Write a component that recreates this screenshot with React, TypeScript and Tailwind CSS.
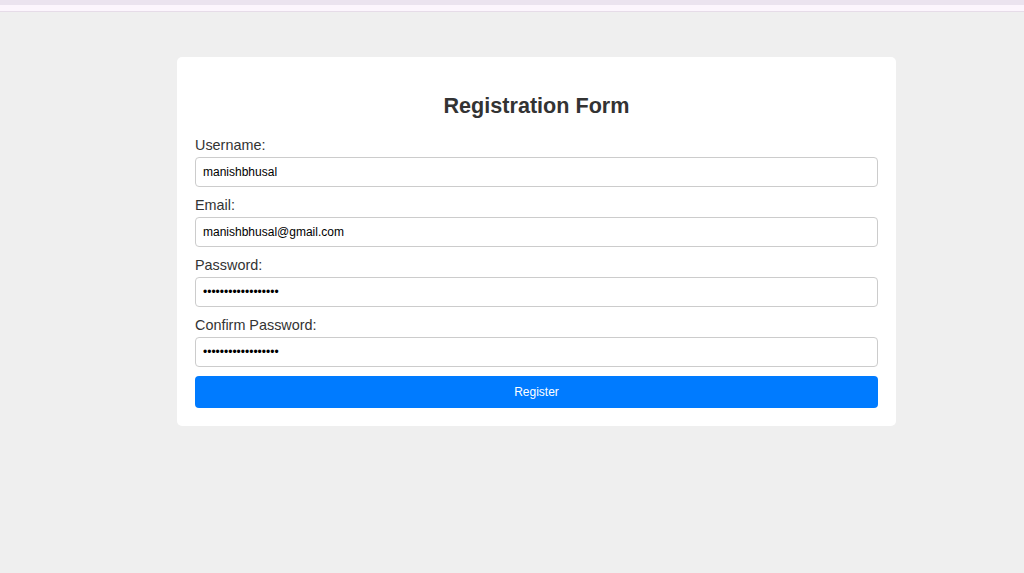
export default function App() {
  const fields = [
    { label: "Username:", type: "text", value: "manishbhusal" },
    { label: "Email:", type: "email", value: "manishbhusal@gmail.com" },
    { label: "Password:", type: "password", value: "manishbhusal123456" },
    { label: "Confirm Password:", type: "password", value: "manishbhusal123456" },
  ];

  return (
    <div className="min-h-screen w-full bg-[#efefef] font-['Liberation_Sans',Arial,sans-serif]">
      <div className="h-[5px] bg-[#ebe3ef]" />
      <div className="h-[6px] bg-[#fcf5fd]" />
      <div className="h-px bg-[#e6dce8]" />
      <div className="ml-[177px] mt-[45px] w-[719px] rounded-[5px] bg-white px-[18px] pb-[18px] pt-[18px]">
        <h2 className="mb-[18px] mt-[18px] text-center text-[21.6px] font-bold leading-[25px] text-[#333]">
          Registration Form
        </h2>
        <form onSubmit={(e) => e.preventDefault()}>
          {fields.map((f) => (
            <div key={f.label}>
              <label className="mb-[3px] block pt-[1px] text-[14.4px] leading-[17px] text-[#333]">
                {f.label}
              </label>
              <input
                type={f.type}
                defaultValue={f.value}
                className="mb-[9px] block h-[30px] w-full rounded-[4px] border border-[#ccc] bg-white px-[7px] text-[12px] text-black outline-none"
              />
            </div>
          ))}
          <button
            type="submit"
            className="block h-[32px] w-full rounded-[4px] bg-[#007bff] text-[12px] text-white"
          >
            Register
          </button>
        </form>
      </div>
    </div>
  );
}
